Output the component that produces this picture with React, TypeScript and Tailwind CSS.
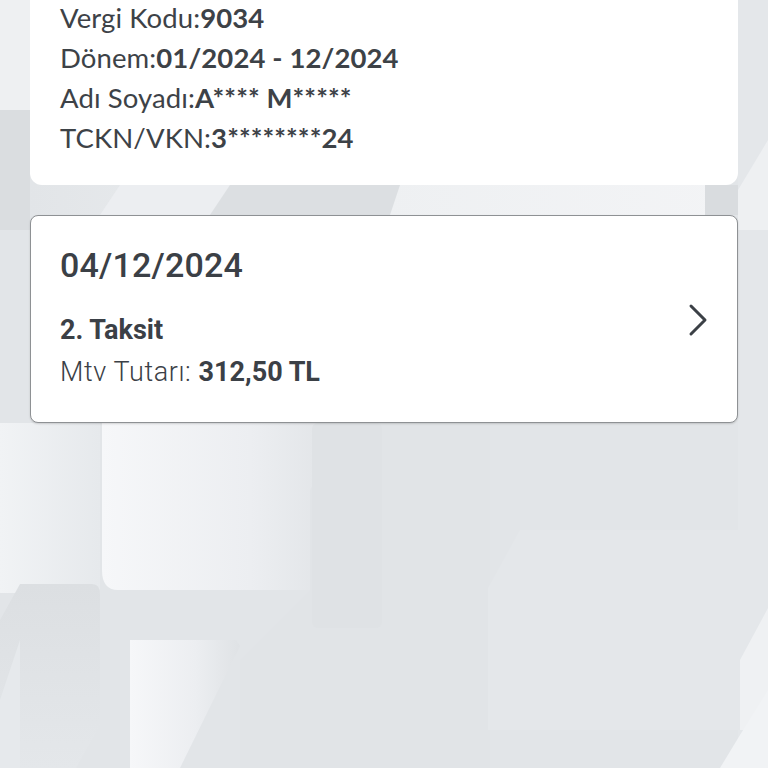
import React from "react";

const Background: React.FC = () => (
  <svg
    className="absolute inset-0 h-full w-full"
    viewBox="0 0 768 768"
    preserveAspectRatio="none"
    aria-hidden
  >
    <defs>
      <linearGradient id="lightH" x1="0" y1="0" x2="1" y2="0">
        <stop offset="0" stopColor="#f6f7f9" />
        <stop offset="0.6" stopColor="#eceef1" />
        <stop offset="1" stopColor="#dfe2e5" />
      </linearGradient>
      <linearGradient id="leftFade" x1="0" y1="0" x2="1" y2="0">
        <stop offset="0" stopColor="#f1f3f5" />
        <stop offset="1" stopColor="#e6e9ec" />
      </linearGradient>
      <linearGradient id="darkV" x1="0" y1="0" x2="0" y2="1">
        <stop offset="0" stopColor="#dcdfe2" />
        <stop offset="1" stopColor="#e4e7ea" />
      </linearGradient>
      <linearGradient id="stripe" x1="0" y1="0" x2="1" y2="0">
        <stop offset="0" stopColor="#e2e5e8" />
        <stop offset="0.5" stopColor="#eef0f2" />
        <stop offset="1" stopColor="#f3f4f6" />
      </linearGradient>
    </defs>
    <rect width="768" height="768" fill="#e2e5e8" />
    {/* top-left light area */}
    <rect x="0" y="0" width="30" height="110" fill="#eef0f2" />
    <rect x="0" y="110" width="30" height="120" fill="#dadde0" />
    {/* stripe between cards */}
    <rect x="30" y="185" width="708" height="30" fill="url(#stripe)" />
    <polygon points="120,185 230,185 210,215 100,215" fill="#eceef1" />
    <polygon points="230,185 400,185 390,215 210,215" fill="#dcdfe2" />
    <rect x="705" y="185" width="33" height="30" fill="#d9dcdf" />
    <rect x="738" y="0" width="30" height="768" fill="#e4e7ea" />
    <polygon points="738,190 768,140 768,230 738,230" fill="#eef0f2" />
    {/* lower area */}
    <rect x="0" y="423" width="100" height="170" fill="url(#leftFade)" />
    <path d="M102 423 H350 L310 490 L310 590 H118 Q102 590 102 570 Z" fill="url(#lightH)" />
    <polygon points="350,423 490,423 490,768 240,768 240,660 310,590 310,490" fill="#e1e4e7" />
    <rect x="312" y="423" width="70" height="205" rx="6" fill="#dfe2e5" />
    <path d="M20 584 H92 Q100 584 100 594 V725 L76 768 H0 V620 Z" fill="url(#darkV)" />
    <polygon points="130,640 236,640 240,646 180,768 130,768" fill="url(#lightH)" />
    <polygon points="0,700 20,640 20,768 0,768" fill="#e6e9ec" />
    <polygon points="488,588 520,530 768,530 768,730 488,730" fill="#e4e7ea" />
    <polygon points="768,528 768,608 740,660 740,730 768,730" fill="#eff1f3" />
    <polygon points="740,735 768,690 768,768 720,768" fill="#f1f3f5" />
  </svg>
);

const Row: React.FC<{ label: string; value: string }> = ({ label, value }) => (
  <p className="h-10 leading-10 whitespace-nowrap">
    <span className="font-normal">{label}</span>
    <span className="font-bold">{value}</span>
  </p>
);

export default function App() {
  return (
    <div className="relative h-[768px] w-[768px] overflow-hidden">
      <Background />
      <div className="relative flex flex-col gap-[30px] px-[30px]">
        <div
          className="-mt-[2px] rounded-b-[12px] bg-white pl-[30px] pb-[27px] text-[27.5px] tracking-[0.1px] text-[#3d4247]"
          style={{ fontFamily: "Lato, 'Noto Sans', sans-serif" }}
        >
          <Row label="Vergi Kodu:" value="9034" />
          <Row label="Dönem:" value="01/2024 - 12/2024" />
          <Row label="Adı Soyadı:" value="A**** M*****" />
          <Row label="TCKN/VKN:" value="3********24" />
        </div>

        <div
          className="flex h-[208px] items-start rounded-[8px] border-[1.5px] border-[#8e9194] bg-white pl-[29px] pr-[28px] pt-[32px] text-[#3b4046] shadow-[0_1px_2px_rgba(0,0,0,0.15)]"
          style={{ fontFamily: "Roboto, 'Noto Sans', sans-serif" }}
        >
          <div className="flex-1">
            <p className="h-[34px] whitespace-nowrap text-[34px] font-medium leading-[34px] tracking-[0.2px]">04/12/2024</p>
            <p className="mt-[34px] h-[28px] whitespace-nowrap text-[27px] font-bold leading-[28px]">2. Taksit</p>
            <p className="mt-[14px] h-[28px] whitespace-nowrap text-[27px] leading-[28px]">
              <span className="font-light tracking-[0.6px]">Mtv Tutarı: </span>
              <span className="font-bold">312,50 TL</span>
            </p>
          </div>
          <svg width="22" height="34" viewBox="0 0 22 34" className="mt-[55px]" aria-hidden>
            <path d="M4 3 L18 17 L4 31" fill="none" stroke="#3b4046" strokeWidth="3" strokeLinecap="round" strokeLinejoin="round" />
          </svg>
        </div>
      </div>
    </div>
  );
}
